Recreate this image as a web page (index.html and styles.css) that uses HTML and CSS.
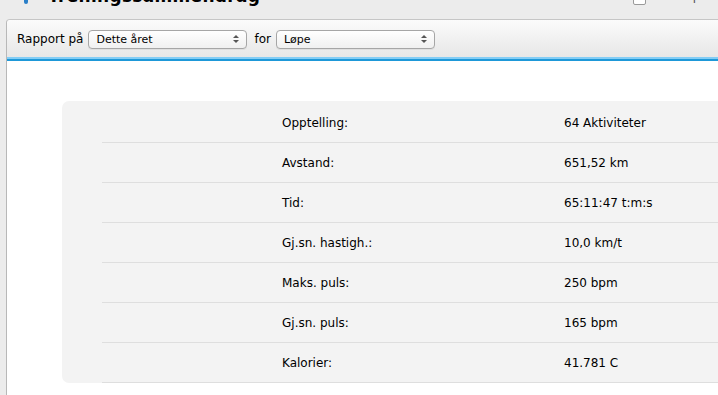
FILE: index.html
```html
<!DOCTYPE html>
<html lang="no">
<head>
  <meta charset="UTF-8" />
  <title>Treningssammendrag</title>
  <link rel="stylesheet" href="styles.css">
</head>
<body>
  <div class="titlebar">
    <span class="title-icon"></span>
    <h1>Treningssammendrag</h1>
    <span class="check"></span>
    <span class="title-right">Eksporter</span>
  </div>

  <div class="window">
    <div class="toolbar">
      <label>Rapport på</label>
      <div class="select">Dette året</div>
      <label>for</label>
      <div class="select">Løpe</div>
    </div>
    <div class="blue-bar"></div>

    <div class="content">
      <div class="card">
        <div class="row"><span class="label">Opptelling:</span><span>64 Aktiviteter</span></div>
        <div class="row"><span class="label">Avstand:</span><span>651,52 km</span></div>
        <div class="row"><span class="label">Tid:</span><span>65:11:47 t:m:s</span></div>
        <div class="row"><span class="label">Gj.sn. hastigh.:</span><span>10,0 km/t</span></div>
        <div class="row"><span class="label">Maks. puls:</span><span>250 bpm</span></div>
        <div class="row"><span class="label">Gj.sn. puls:</span><span>165 bpm</span></div>
        <div class="row"><span class="label">Kalorier:</span><span>41.781 C</span></div>
      </div>
    </div>
  </div>
</body>
</html>
```

FILE: styles.css
```css
* {
  box-sizing: border-box;
  margin: 0;
  padding: 0;
}

body {
  background: #ececec;
  color: #000;
  font-family: "DejaVu Sans", sans-serif;
  font-size: 12px;
  height: 395px;
  overflow: hidden;
}

.titlebar {
  height: 19px;
  overflow: hidden;
  display: flex;
  align-items: flex-start;
}

.title-icon {
  width: 4px;
  height: 4px;
  margin: 0 20px 0 24px;
  background: #2a7fc8;
  border-radius: 0 0 2px 2px;
}

.titlebar h1 {
  font-size: 17px;
  font-weight: bold;
  margin-top: -14px;
  line-height: 20px;
  letter-spacing: 0.3px;
}

.check {
  margin-left: auto;
  margin-top: -8px;
  width: 13px;
  height: 13px;
  background: #fff;
  border: 1px solid #9a9a9a;
  border-radius: 2px;
}

.title-right {
  margin: -13px 0 0 26px;
  line-height: 18px;
  font-size: 12px;
  width: 46px;
  overflow: hidden;
  white-space: nowrap;
  color: #555;
}

.window {
  margin-left: 6px;
  border-left: 1px solid #b8b8b8;
  border-top: 1px solid #c6c6c6;
  border-top-left-radius: 4px;
  background: #fff;
  height: 376px;
}

.toolbar {
  height: 37px;
  display: flex;
  align-items: center;
  padding: 1px 0 0 10px;
  background: linear-gradient(#fbfbfb, #e7e7e7);
  border-top-left-radius: 4px;
}

.toolbar label {
  font-size: 12px;
  margin-right: 5px;
}

.select {
  position: relative;
  width: 159px;
  height: 19px;
  line-height: 17px;
  padding-left: 7px;
  font-size: 11px;
  border: 1px solid #a6a6a6;
  border-radius: 4px;
  background: linear-gradient(#ffffff, #f0f0f0);
  box-shadow: 0 1px 0 rgba(0, 0, 0, 0.05);
  margin-right: 7px;
}

/* up / down arrows of the popup button */
.select::before,
.select::after {
  content: "";
  position: absolute;
  right: 7px;
  border-left: 3px solid transparent;
  border-right: 3px solid transparent;
}

.select::before {
  top: 4px;
  border-bottom: 3px solid #555;
}

.select::after {
  top: 9px;
  border-top: 3px solid #555;
}

.blue-bar {
  height: 4px;
  border-top: 2px solid #83cdf5;
  background: #1e98d8;
}

.content {
  padding: 40px 0 0 55px;
}

.card {
  background: #f3f3f3;
  border-radius: 7px 0 0 7px;
  padding: 2px 0 0 40px;
}

.row {
  display: flex;
  align-items: center;
  height: 40px;
  padding-left: 180px;
  border-bottom: 1px solid #dedede;
  font-size: 12px;
}

.row .label {
  width: 282px;
}
```
